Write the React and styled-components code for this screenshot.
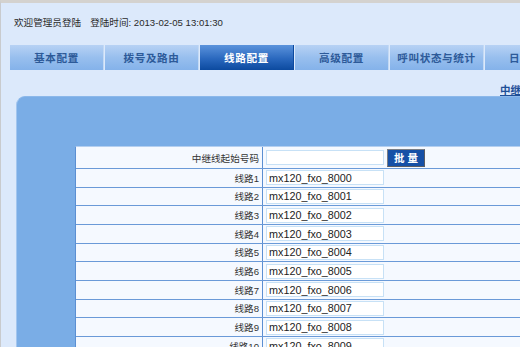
import React from "react";
import styled, { createGlobalStyle } from "styled-components";

const Global = createGlobalStyle`
  html, body { margin: 0; padding: 0; overflow: hidden; background: #dce9fb; }
  body { font-family: "Liberation Sans", "Noto Sans CJK SC", sans-serif; }
`;

const Page = styled.div`
  width: 700px;
  height: 347px;
  box-sizing: border-box;
  background: #dce9fb;
  border-top: 3px solid #d4d2cf;
  border-left: 1px solid #c9cbce;
  overflow: hidden;
`;

const Header = styled.div`
  height: 42px;
  box-sizing: border-box;
  padding: 14px 0 0 13px;
  font-size: 9.6px;
  line-height: 12px;
  color: #2a2a2a;
  white-space: nowrap;
`;

const Gap = styled.span`
  display: inline-block;
  width: ${(p) => p.w}px;
`;

const Tabs = styled.div`
  display: flex;
  gap: 1px;
  padding-left: 9px;
  height: 25px;
`;

const Tab = styled.div`
  flex: 0 0 94px;
  height: 25px;
  display: flex;
  align-items: center;
  justify-content: center;
  font-family: "Noto Sans CJK SC", sans-serif;
  font-weight: 700;
  font-size: 10.6px;
  letter-spacing: 0.6px;
  color: ${(p) => (p.active ? "#ffffff" : "#2d5a99")};
  background: ${(p) =>
    p.active
      ? "linear-gradient(#5b93dc, #2a68be 55%, #0c4a9f)"
      : "linear-gradient(#b7d2f4, #98bfee 50%, #84b2ea)"};
  border-right: 1px solid ${(p) => (p.active ? "#0c4a9f" : "#c3d9f4")};
  box-sizing: border-box;
  white-space: nowrap;
`;

const LinkRow = styled.div`
  margin-top: 10px;
  height: 16px;
  padding-left: 499px;
  white-space: nowrap;
`;

const TopLink = styled.a`
  display: inline-block;
  margin-top: -1px;
  font-family: "Noto Sans CJK SC", sans-serif;
  font-weight: 700;
  font-size: 10.5px;
  line-height: 14px;
  color: #1e4f97;
  text-decoration: underline;
`;

const Panel = styled.div`
  margin-left: 15px;
  background: #7aade6;
  border-left: 1px solid #a3c6ef;
  border-top: 1px solid #8cb8ea;
  border-radius: 9px 0 0 0;
  padding: 49px 0 0 58px;
  height: 300px;
`;

const Table = styled.div`
  width: 620px;
  background: #f5f9ff;
  border-top: 1px solid #b4cff0;
  border-left: 1px solid #5b8fd2;
`;

const Row = styled.div`
  display: grid;
  grid-template-columns: 187px 1fr;
  height: ${(p) => (p.first ? 22 : 18.67)}px;
  box-sizing: border-box;
  border-bottom: 1px solid #6a9ad8;
`;

const Label = styled.div`
  display: flex;
  align-items: center;
  justify-content: flex-end;
  padding-right: 3px;
  font-size: 9.6px;
  color: #333;
  border-right: 1px solid #5b8fd2;
  white-space: nowrap;
`;

const Value = styled.div`
  display: flex;
  align-items: center;
  gap: 3px;
  padding-left: 3px;
  white-space: nowrap;
`;

const Input = styled.input`
  width: 118px;
  height: 15px;
  box-sizing: border-box;
  border: 1px solid #c7e1f6;
  background: #fff;
  padding: 0 0 0 2px;
  margin: 0;
  font-family: "Liberation Sans", sans-serif;
  font-size: 10.8px;
  line-height: 13px;
  color: #222;
  outline: none;
`;

const Button = styled.button`
  width: 38px;
  height: 18px;
  margin: 0;
  padding: 0;
  background: #1650a6;
  border: 1px solid #7b7f86;
  border-right-color: #5a5d63;
  border-bottom-color: #5a5d63;
  color: #fff;
  font-family: "Noto Sans CJK SC", serif;
  font-weight: 700;
  font-size: 10.5px;
  letter-spacing: 3px;
  text-indent: 3px;
  line-height: 16px;
`;

const tabs = ["基本配置", "拨号及路由", "线路配置", "高级配置", "呼叫状态与统计", "日志管理"];

export default function App() {
  const lines = Array.from({ length: 10 }, (_, i) => i);
  return (
    <>
      <Global />
      <Page>
        <Header>
          欢迎管理员登陆<Gap w={9} />登陆时间: 2013-02-05 13:01:30
        </Header>
        <Tabs>
          {tabs.map((t, i) => (
            <Tab key={t} active={i === 2}>
              {t}
            </Tab>
          ))}
        </Tabs>
        <LinkRow>
          <TopLink href="#">中继线批量配置</TopLink>
        </LinkRow>
        <Panel>
          <Table>
            <Row first>
              <Label>中继线起始号码</Label>
              <Value>
                <Input defaultValue="" />
                <Button>批量</Button>
              </Value>
            </Row>
            {lines.map((i) => (
              <Row key={i}>
                <Label>线路{i + 1}</Label>
                <Value>
                  <Input defaultValue={`mx120_fxo_${8000 + i}`} />
                </Value>
              </Row>
            ))}
          </Table>
        </Panel>
      </Page>
    </>
  );
}
